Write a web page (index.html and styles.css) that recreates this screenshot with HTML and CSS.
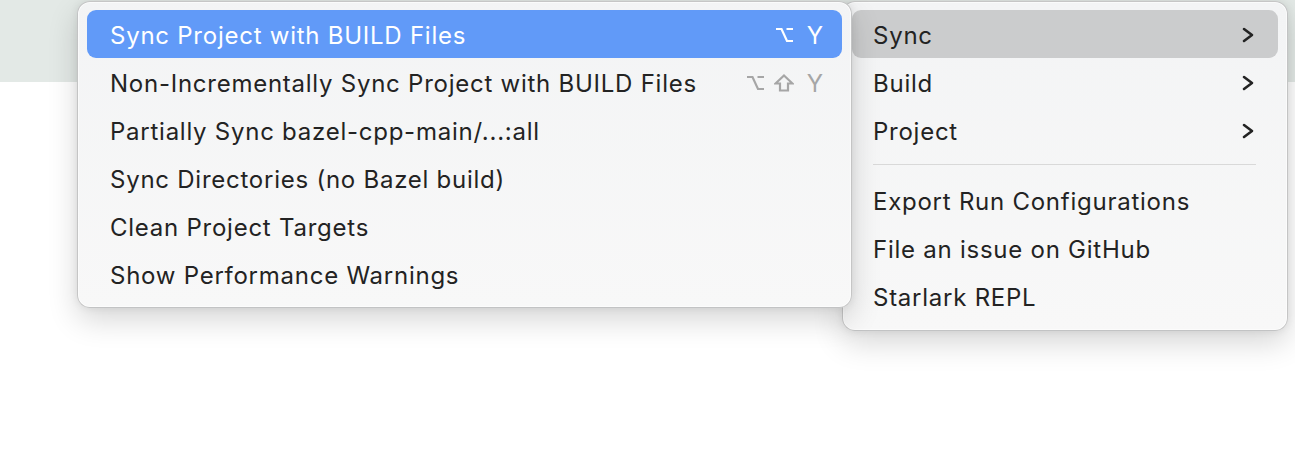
FILE: index.html
```html
<!DOCTYPE html>
<html lang="en">
<head>
    <meta charset="UTF-8">
    <title>Bazel Menu</title>
    <link rel="stylesheet" href="styles.css">
</head>
<body>
    <!-- Window toolbar strip behind the menus -->
    <div class="toolbar"></div>

    <!-- Submenu: Sync -->
    <div class="menu sync-menu">
        <div class="item active">
            <span class="label">Sync Project with BUILD Files</span>
            <span class="keys">
                <svg class="opt" viewBox="0 0 19 16"><path d="M1 2H6.5L12 14H18M11.5 2H18" /></svg>
                <span class="key">Y</span>
            </span>
        </div>
        <div class="item">
            <span class="label">Non-Incrementally Sync Project with BUILD Files</span>
            <span class="keys dim">
                <svg class="opt" viewBox="0 0 19 16"><path d="M1 2H6.5L12 14H18M11.5 2H18" /></svg>
                <svg class="shift" viewBox="0 0 20 18"><path d="M10 1.5L18.5 9.5H14V16.5H6V9.5H1.5Z" /></svg>
                <span class="key">Y</span>
            </span>
        </div>
        <div class="item"><span class="label">Partially Sync bazel-cpp-main/...:all</span></div>
        <div class="item"><span class="label">Sync Directories (no Bazel build)</span></div>
        <div class="item"><span class="label">Clean Project Targets</span></div>
        <div class="item"><span class="label">Show Performance Warnings</span></div>
    </div>

    <!-- Main Bazel menu -->
    <div class="menu main-menu">
        <div class="item selected">
            <span class="label">Sync</span>
            <svg class="chevron" viewBox="0 0 12 16"><path d="M2 2L10 8L2 14" /></svg>
        </div>
        <div class="item">
            <span class="label">Build</span>
            <svg class="chevron" viewBox="0 0 12 16"><path d="M2 2L10 8L2 14" /></svg>
        </div>
        <div class="item">
            <span class="label">Project</span>
            <svg class="chevron" viewBox="0 0 12 16"><path d="M2 2L10 8L2 14" /></svg>
        </div>
        <div class="separator"></div>
        <div class="item"><span class="label">Export Run Configurations</span></div>
        <div class="item"><span class="label">File an issue on GitHub</span></div>
        <div class="item"><span class="label">Starlark REPL</span></div>
    </div>
</body>
</html>
```

FILE: styles.css
```css
body {
    margin: 0;
    padding: 0;
    height: 455px;
    background: #ffffff;
    font-family: Inter, "Liberation Sans", Arial, sans-serif;
    overflow: hidden;
}

.toolbar {
    height: 82px;
    background: #e3e9e6;
}

.menu {
    position: absolute;
    box-sizing: border-box;
    display: flex;
    flex-direction: column;
    padding: 8px 9px;
    background: linear-gradient(#f3f4f5, #f8f8f8);
    border: 1px solid rgba(0, 0, 0, 0.2);
    border-radius: 13px;
    box-shadow: 0 12px 30px rgba(0, 0, 0, 0.16), 0 0 8px rgba(0, 0, 0, 0.08), inset 0 0 0 1px rgba(255, 255, 255, 0.6);
}

.sync-menu {
    left: 77px;
    top: 1px;
    width: 775px;
    height: 307px;
    z-index: 2;
}

.main-menu {
    left: 842px;
    top: 1px;
    width: 446px;
    height: 330px;
    z-index: 1;
}

.item {
    display: flex;
    align-items: center;
    justify-content: space-between;
    box-sizing: border-box;
    height: 48px;
    padding: 2px 19px 0 23px;
    border-radius: 9px;
    color: #232323;
    font-size: 24px;
    letter-spacing: 0.75px;
    white-space: nowrap;
}

.item.active {
    background: #619af8;
    color: #ffffff;
}

.item.selected {
    background: #cbcccd;
}

.main-menu .item {
    padding: 2px 24px 0 21px;
}

.keys {
    display: flex;
    align-items: center;
    gap: 9px;
}

.keys.dim {
    color: #a6a6a6;
}

.keys svg {
    fill: none;
    stroke: currentColor;
    stroke-width: 2.2;
}

.opt {
    width: 19px;
    height: 16px;
}

.shift {
    width: 20px;
    height: 18px;
}

.key {
    margin-left: 4px;
    letter-spacing: 0;
}

.chevron {
    width: 12px;
    height: 16px;
    fill: none;
    stroke: #232323;
    stroke-width: 2.6;
    stroke-linecap: round;
    stroke-linejoin: round;
}

.separator {
    height: 1px;
    margin: 10px 22px 11px 21px;
    background: #d9d9d9;
}
```
